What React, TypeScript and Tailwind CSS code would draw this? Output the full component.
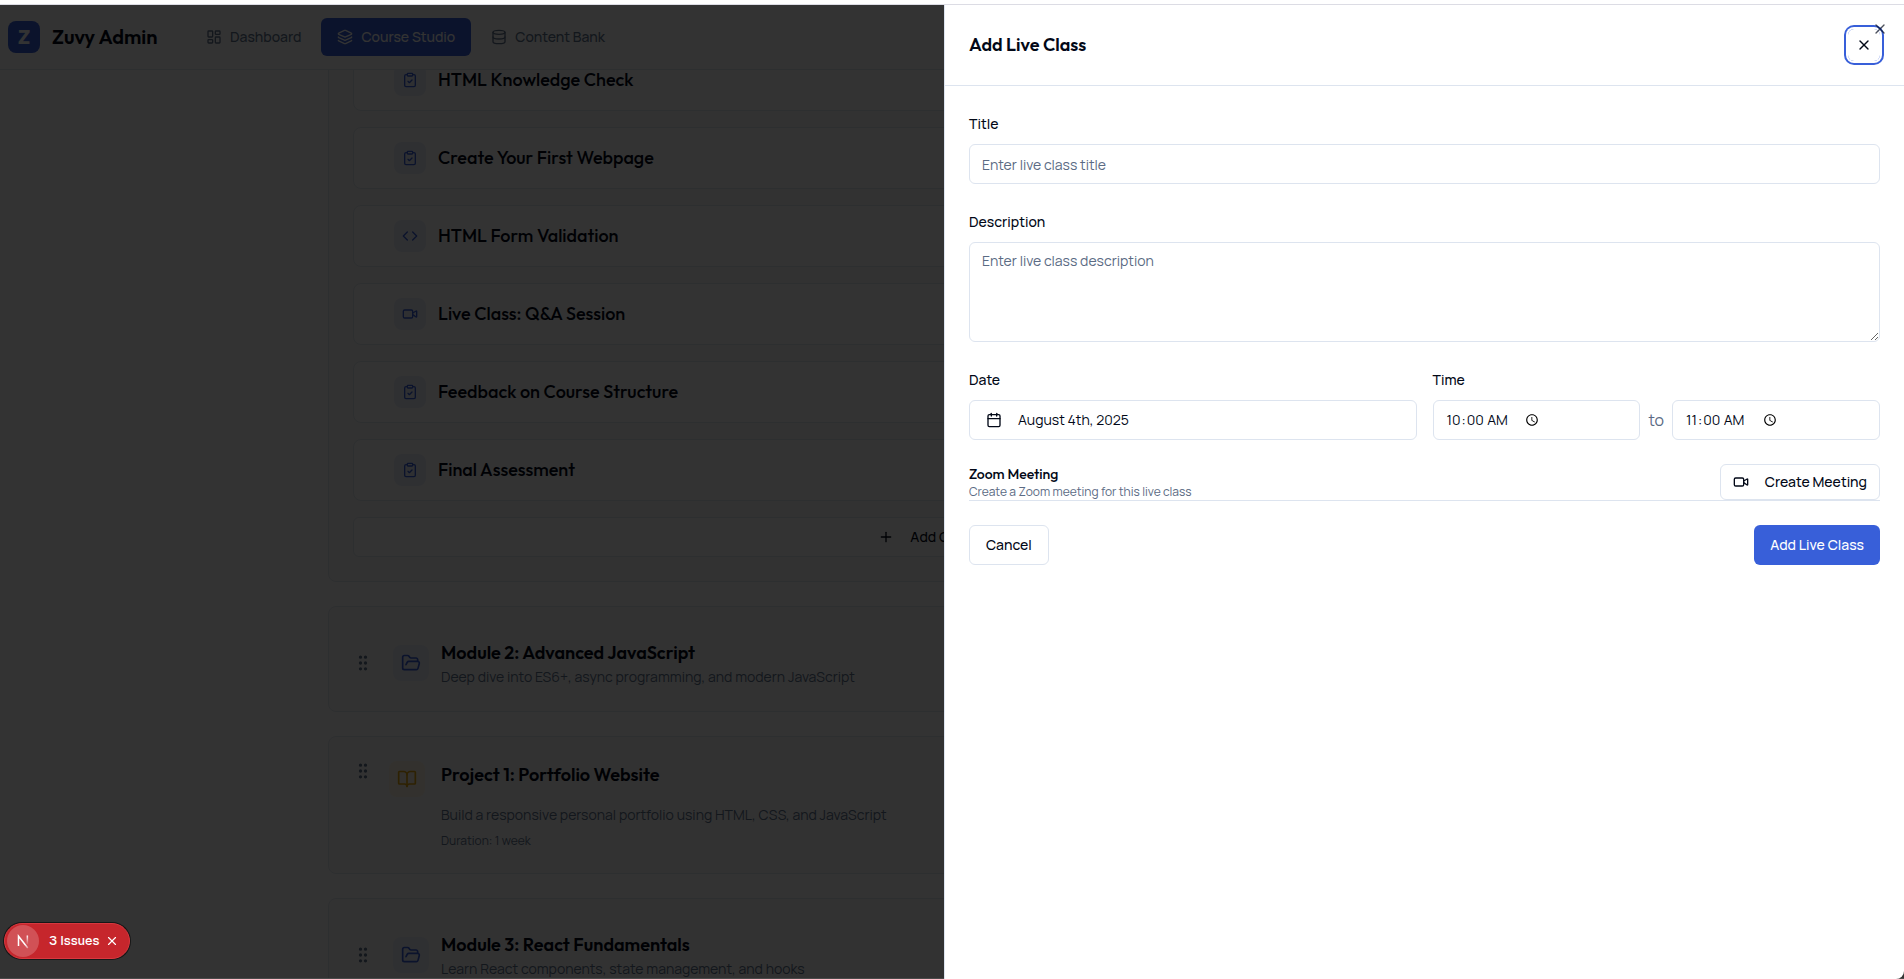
import React from "react";
import {
  BookOpen,
  Calendar,
  ClipboardCheck,
  Code,
  Database,
  FolderOpen,
  GripVertical,
  Layers,
  LayoutDashboard,
  Plus,
  Video,
  X,
  type LucideIcon,
} from "lucide-react";

const heading = "font-['Outfit','Lato',sans-serif]";

const navItems: { label: string; icon: LucideIcon; active?: boolean }[] = [
  { label: "Dashboard", icon: LayoutDashboard },
  { label: "Course Studio", icon: Layers, active: true },
  { label: "Content Bank", icon: Database },
];

const lessons: { title: string; icon: LucideIcon }[] = [
  { title: "HTML Knowledge Check", icon: ClipboardCheck },
  { title: "Create Your First Webpage", icon: ClipboardCheck },
  { title: "HTML Form Validation", icon: Code },
  { title: "Live Class: Q&A Session", icon: Video },
  { title: "Feedback on Course Structure", icon: ClipboardCheck },
  { title: "Final Assessment", icon: ClipboardCheck },
];

function Header() {
  return (
    <header className="relative z-10 flex h-[65px] shrink-0 items-center border-b border-slate-200 bg-white px-2">
      <div className="flex w-[182px] items-center gap-3">
        <span className={`flex size-8 items-center justify-center rounded-lg bg-[#385fd9] text-xl font-bold text-white ${heading}`}>
          Z
        </span>
        <span className={`text-xl font-semibold ${heading}`}>Zuvy Admin</span>
      </div>
      <nav className="flex gap-1">
        {navItems.map(({ label, icon: Icon, active }) => (
          <a
            key={label}
            href="#"
            className={`flex h-[38px] items-center gap-2 rounded-md px-4 text-sm font-medium ${
              active ? "bg-[#385fd9] text-white" : "text-slate-500"
            }`}
          >
            <Icon className="size-4" />
            {label}
          </a>
        ))}
      </nav>
    </header>
  );
}

function LessonRow({ title, icon: Icon }: { title: string; icon: LucideIcon }) {
  return (
    <li className="flex h-[62px] items-center gap-3 rounded-lg border border-slate-200 bg-white px-10">
      <span className="flex size-8 items-center justify-center rounded-lg bg-[#ebeffb] text-[#385fd9]">
        <Icon className="size-4" />
      </span>
      <h4 className={`text-lg font-medium ${heading}`}>{title}</h4>
    </li>
  );
}

function ModuleCard({ title, text }: { title: string; text: string }) {
  return (
    <section className="flex h-[106px] shrink-0 items-center rounded-lg border border-slate-200 bg-[#fafafa] px-6 pt-2">
      <GripVertical className="size-5 text-slate-500" />
      <span className="ml-5 flex size-9 items-center justify-center rounded-lg bg-[#ebeffb] text-[#385fd9]">
        <FolderOpen className="size-5" />
      </span>
      <div className="ml-3 flex flex-col">
        <h3 className={`text-lg font-semibold leading-7 ${heading}`}>{title}</h3>
        <p className="text-sm text-slate-500">{text}</p>
      </div>
    </section>
  );
}

function CoursePage() {
  return (
    <div className="flex h-full flex-col overflow-hidden bg-white">
      <Header />
      <main className="mx-auto flex w-full max-w-[1248px] flex-col gap-6">
        <section className="-mt-10 rounded-lg border border-slate-200 bg-[#fafafa] px-6 pb-6 pt-[18px]">
          <ul className="flex flex-col gap-4">
            {lessons.map((lesson) => (
              <LessonRow key={lesson.title} {...lesson} />
            ))}
          </ul>
          <button className="mt-4 flex h-10 w-full items-center justify-center gap-4 rounded-md border border-slate-200 bg-white text-sm font-medium">
            <Plus className="size-4" />
            Add Content Item
          </button>
        </section>
        <ModuleCard title="Module 2: Advanced JavaScript" text="Deep dive into ES6+, async programming, and modern JavaScript" />
        <section className="flex h-[138px] shrink-0 rounded-lg border border-slate-200 bg-[#fafafa] px-6 pt-6">
          <GripVertical className="size-5 text-slate-500" />
          <span className="ml-4 flex size-9 items-center justify-center rounded-lg bg-[#fdf6e3] text-[#e5a50a]">
            <BookOpen className="size-5" />
          </span>
          <div className="ml-4 flex flex-col">
            <h3 className={`text-lg font-semibold leading-7 ${heading}`}>Project 1: Portfolio Website</h3>
            <p className="mt-4 text-sm text-slate-500">
              Build a responsive personal portfolio using HTML, CSS, and JavaScript
            </p>
            <p className="mt-2 text-xs text-slate-500">Duration: 1 week</p>
          </div>
        </section>
        <ModuleCard title="Module 3: React Fundamentals" text="Learn React components, state management, and hooks" />
      </main>
    </div>
  );
}

function TimeField({ label, value }: { label: string; value: string }) {
  return (
    <input
      type="time"
      aria-label={label}
      defaultValue={value}
      className="h-10 min-w-0 flex-1 rounded-md border border-[#dde4ef] px-3 text-sm outline-none [&::-webkit-calendar-picker-indicator]:ml-3 [&::-webkit-datetime-edit]:flex-none"
    />
  );
}

const field = "w-full rounded-md border border-[#dde4ef] px-3 text-sm outline-none placeholder:text-[#5b6b84]";

function LiveClassPanel() {
  return (
    <aside
      role="dialog"
      aria-labelledby="panel-title"
      className="absolute inset-y-0 right-0 w-[calc(50%+8px)] rounded-br-lg border-l border-[#dde4ef] bg-white"
    >
      <header className="flex h-[81px] items-center justify-between border-b border-[#dde4ef] px-6">
        <h2 id="panel-title" className={`text-lg font-semibold ${heading}`}>
          Add Live Class
        </h2>
        <button
          aria-label="Close panel"
          className="flex size-8 items-center justify-center rounded-md ring-2 ring-[#385fd9] ring-offset-2"
        >
          <X className="size-4" />
        </button>
      </header>
      <button aria-label="Close" className="absolute right-4 top-4 opacity-70">
        <X className="size-4" />
      </button>

      <form className="flex flex-col px-6 pt-6" onSubmit={(event) => event.preventDefault()}>
        <label htmlFor="title" className="text-sm font-medium leading-7">
          Title
        </label>
        <input id="title" placeholder="Enter live class title" className={`mt-1.5 h-10 ${field}`} />

        <label htmlFor="description" className="mt-6 text-sm font-medium leading-7">
          Description
        </label>
        <textarea
          id="description"
          placeholder="Enter live class description"
          className={`mt-1.5 h-[100px] resize-y py-2 ${field}`}
        />

        <div className="mt-6 grid grid-cols-2 gap-4">
          <div className="flex flex-col gap-1.5">
            <label htmlFor="date" className="text-sm font-medium leading-7">
              Date
            </label>
            <button
              id="date"
              type="button"
              className="flex h-10 items-center gap-4 rounded-md border border-[#dde4ef] px-4 text-sm"
            >
              <Calendar className="size-4" />
              August 4th, 2025
            </button>
          </div>
          <div className="flex flex-col gap-1.5">
            <span className="text-sm font-medium leading-7">Time</span>
            <div className="flex items-center gap-2">
              <TimeField label="Start time" value="10:00" />
              <span className="text-base text-[#5b6b84]">to</span>
              <TimeField label="End time" value="11:00" />
            </div>
          </div>
        </div>

        <div className="mt-6 flex items-center justify-between border-b border-[#dde4ef]">
          <div>
            <h3 className={`text-sm font-medium ${heading}`}>Zoom Meeting</h3>
            <p className="text-xs text-[#5b6b84]">Create a Zoom meeting for this live class</p>
          </div>
          <button
            type="button"
            className="flex h-9 items-center gap-4 rounded-md border border-[#dde4ef] px-3 text-sm font-medium"
          >
            <Video className="size-4" />
            Create Meeting
          </button>
        </div>

        <div className="mt-6 flex justify-between">
          <button type="button" className="h-10 rounded-md border border-[#dde4ef] px-4 text-sm font-medium">
            Cancel
          </button>
          <button type="submit" className="h-10 rounded-md bg-[#385fd9] px-4 text-sm font-medium text-white">
            Add Live Class
          </button>
        </div>
      </form>
    </aside>
  );
}

function IssuesBadge() {
  return (
    <div className="absolute bottom-5 left-1 flex h-9 items-center rounded-full border border-[#d8383f] bg-[#c6262c] pl-0.5 pr-2.5 font-['Geist','Roboto',sans-serif] text-[13px] font-medium text-white shadow-[0_0_0_1px_#171717]">
      <span className="flex size-8 items-center justify-center rounded-full bg-white/20">
        <svg viewBox="0 0 16 16" className="size-4" fill="none" strokeWidth="1.5">
          <defs>
            <linearGradient id="diagonal" x1="3" y1="2" x2="13" y2="15" gradientUnits="userSpaceOnUse">
              <stop offset="0.7" stopColor="white" />
              <stop offset="1" stopColor="white" stopOpacity="0.4" />
            </linearGradient>
            <linearGradient id="stem" x1="12" y1="2" x2="12" y2="11" gradientUnits="userSpaceOnUse">
              <stop stopColor="white" />
              <stop offset="1" stopColor="white" stopOpacity="0.1" />
            </linearGradient>
          </defs>
          <path d="M3.500 13V3.200L12.800 15" stroke="url(#diagonal)" />
          <path d="M11.600 2.500h1.500v8.500h-1.500z" fill="url(#stem)" />
        </svg>
      </span>
      <span className="ml-2.5">3 Issues</span>
      <button aria-label="Dismiss issues" className="ml-1.5">
        <X className="size-3.5" />
      </button>
    </div>
  );
}

export default function App() {
  return (
    <div className="flex h-screen flex-col bg-white font-['Manrope','Inter',sans-serif] text-[#020817]">
      <div className="h-[5px] shrink-0 border-b border-[#dcdce4]" />
      <div className="relative min-h-0 flex-1">
        <CoursePage />
        <div className="absolute inset-0 z-20 border-b border-[#4a4a4a] bg-black/80" />
        <div className="absolute inset-0 z-30">
          <LiveClassPanel />
          <IssuesBadge />
        </div>
      </div>
    </div>
  );
}
